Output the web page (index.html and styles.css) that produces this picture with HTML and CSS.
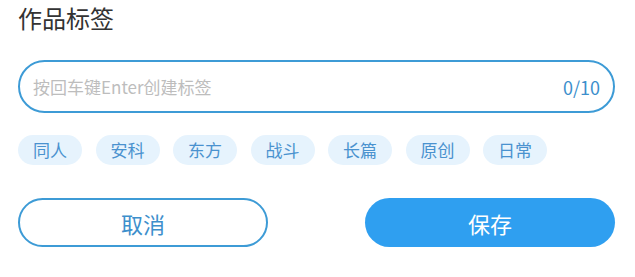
FILE: index.html
```html
<!DOCTYPE html>
<html lang="zh-CN">
<head>
    <meta charset="UTF-8">
    <title>作品标签</title>
    <link rel="stylesheet" href="styles.css">
</head>
<body>
    <div class="panel">
        <h2 class="title">作品标签</h2>
        <div class="tag-input">
            <input type="text" placeholder="按回车键Enter创建标签">
            <span class="count">0/10</span>
        </div>
        <div class="tags">
            <span class="tag">同人</span>
            <span class="tag">安科</span>
            <span class="tag">东方</span>
            <span class="tag">战斗</span>
            <span class="tag">长篇</span>
            <span class="tag">原创</span>
            <span class="tag">日常</span>
        </div>
        <div class="actions">
            <button class="btn btn-cancel">取消</button>
            <button class="btn btn-save">保存</button>
        </div>
    </div>
</body>
</html>
```

FILE: styles.css
```css
body {
    margin: 0;
    background: #fff;
    font-family: "Noto Sans CJK SC", "Open Sans", sans-serif;
}
.panel {
    padding: 0 20px 0 18px;
}
.title {
    margin: 0;
    font-size: 24px;
    font-weight: normal;
    line-height: 36px;
    color: #333;
}
.tag-input {
    margin-top: 24px;
    height: 53px;
    box-sizing: border-box;
    border: 2px solid #3d9bd6;
    border-radius: 27px;
    display: flex;
    align-items: center;
    padding: 0 13px 0 13px;
}
.tag-input input {
    flex: 1;
    border: none;
    outline: none;
    font-family: inherit;
    font-size: 17px;
    color: #333;
    background: transparent;
    padding: 0;
}
.tag-input input::placeholder {
    color: #bdbdbd;
}
.count {
    font-size: 18px;
    color: #3d8fcc;
}
.tags {
    margin-top: 22px;
    display: flex;
    gap: 13.5px;
}
.tag {
    width: 64px;
    height: 30px;
    line-height: 30px;
    text-align: center;
    border-radius: 15px;
    background: #e6f3fd;
    color: #4a92cf;
    font-size: 17px;
}
.actions {
    margin-top: 33px;
    display: flex;
    justify-content: space-between;
}
.btn {
    width: 250px;
    height: 49px;
    border-radius: 25px;
    font-family: inherit;
    font-size: 22px;
    cursor: pointer;
    box-sizing: border-box;
}
.btn-cancel {
    background: #fff;
    border: 2px solid #3d9bd6;
    color: #3d8fcc;
}
.btn-save {
    background: #2f9ff0;
    border: none;
    color: #fff;
}
```
